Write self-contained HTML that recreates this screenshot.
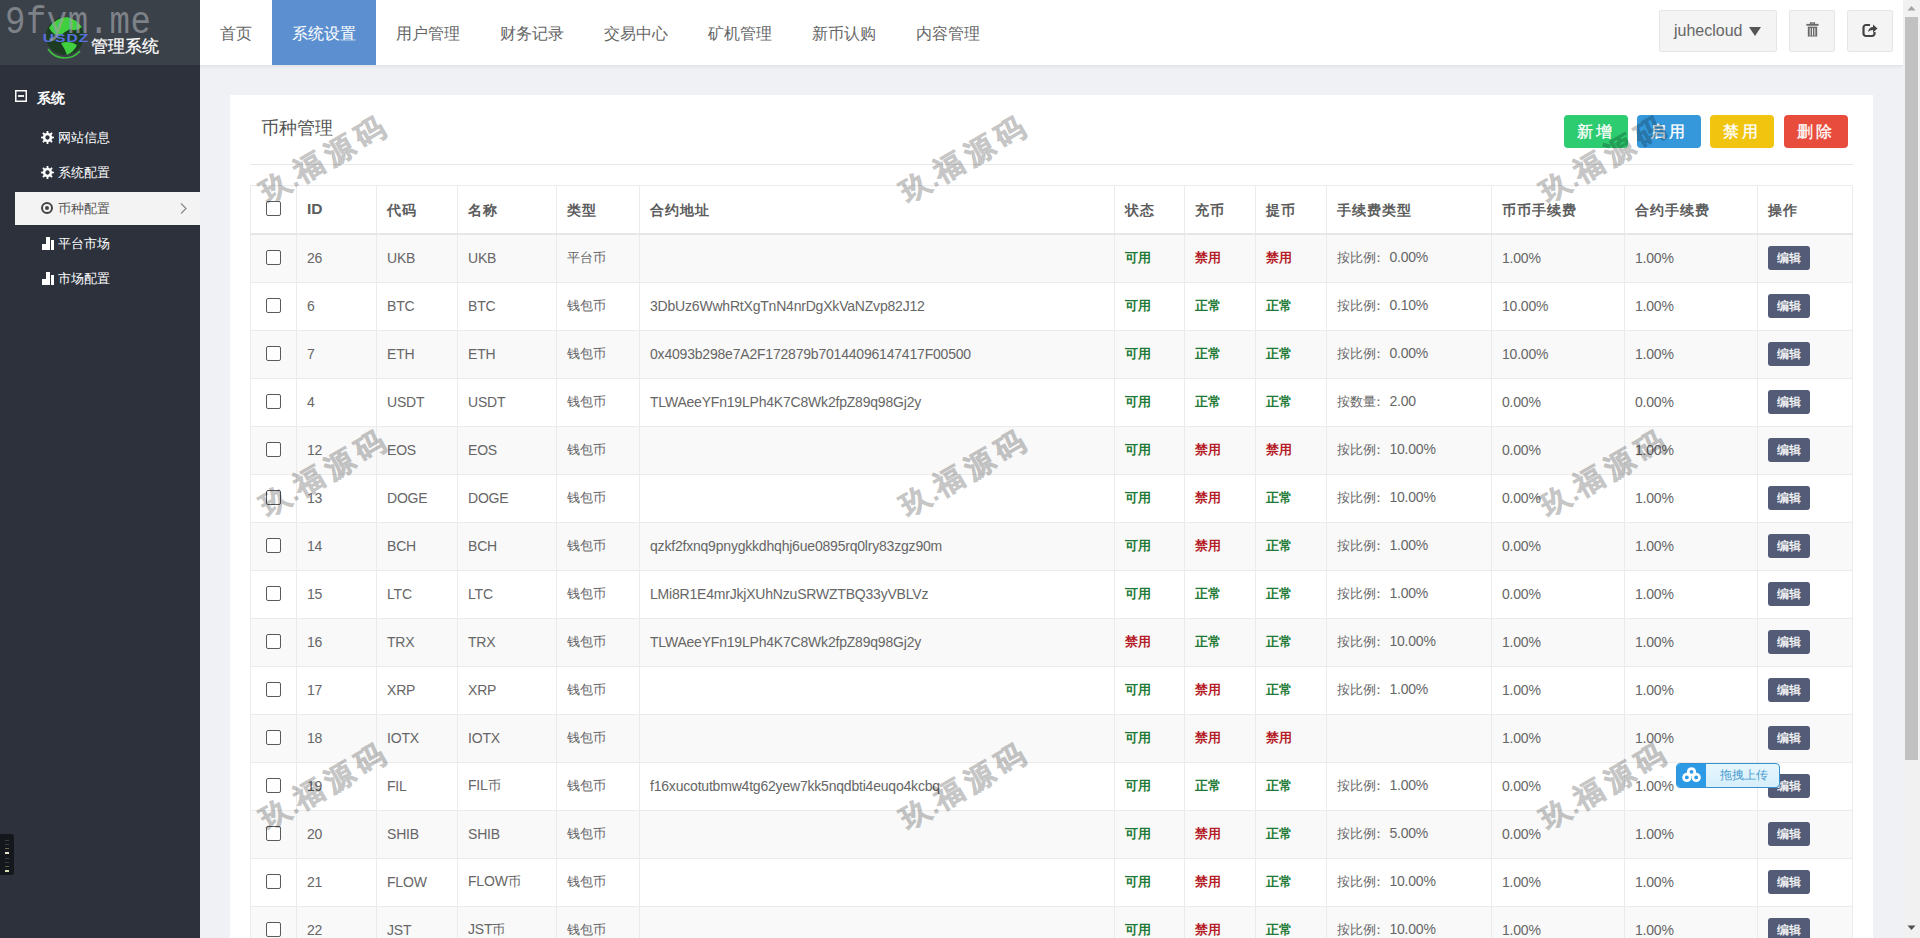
<!DOCTYPE html>
<html><head><meta charset="utf-8">
<style>
*{box-sizing:border-box;margin:0;padding:0}
html,body{width:1920px;height:938px;overflow:hidden}
body{font-family:"Liberation Sans",sans-serif;background:#eff1f5;position:relative;color:#666;font-size:14px}
#logo{position:absolute;left:0;top:0;width:200px;height:65px;background:#3b4149}
#side{position:absolute;left:0;top:65px;width:200px;height:873px;background:#2c313c}
#hdr{position:absolute;left:200px;top:0;width:1703px;height:65px;background:#fff;box-shadow:0 1px 0 #e4e5e9,0 2px 0 #e8e9ed,0 3px 2px rgba(0,0,0,.03)}
#nav{position:absolute;left:0;top:0;height:65px;display:flex}
#nav a{display:block;height:65px;line-height:67px;padding:0 20px;font-size:16px;color:#666;text-decoration:none}
#nav a.on{background:#5b8fd0;color:#fff}
.tb{position:absolute;top:10px;height:42px;background:#f4f4f4;border:1px solid #e6e6e6;border-radius:2px}
#card{position:absolute;left:230px;top:95px;width:1643px;height:900px;background:#fff}
#ttl{position:absolute;left:31px;top:21px;font-size:18px;color:#555}
#uline{position:absolute;left:20px;top:69px;width:1603px;height:1px;background:#e8e8e8}
.btn{position:absolute;top:20px;width:64px;height:33px;border-radius:4px;color:#fff;font-size:16px;-webkit-text-stroke:0.3px #fff;text-align:center;line-height:33px;letter-spacing:3px}
table{position:absolute;left:20px;top:90px;border-collapse:collapse;table-layout:fixed;width:1603px}
td,th{border:1px solid #ebebeb;height:48px;padding:0 0 0 10px;text-align:left;white-space:nowrap;overflow:hidden;font-size:14px;color:#666;font-weight:normal;letter-spacing:-0.2px}
th{font-weight:bold;color:#5c5c5c;border-bottom:2px solid #e6e6e6;font-size:14px;letter-spacing:1px;padding-top:3px}
tr.odd td{background:#f9f9f9}
th:nth-child(2){font-size:15.5px;letter-spacing:0;padding-top:0}
.c{font-size:13px}
.col{display:inline-block;width:14px;font-size:13px;text-indent:-3px;overflow:hidden;vertical-align:top}
tbody td{padding-bottom:2px}
tbody tr:first-child td{height:49px;padding-bottom:0}
tbody tr:first-child .cb{margin-top:-5px}
th .cb{margin-top:-7px}
td .cb{margin-top:-3px}
.cb{display:inline-block;width:15px;height:15px;border:1px solid #5a5a5a;border-radius:2px;background:#fff;vertical-align:middle;margin-left:5px}
b.g{color:#1d7a34;font-weight:bold;font-size:13px}
b.r{color:#b51d28;font-weight:bold;font-size:13px}
.edit{display:inline-block;width:42px;height:24px;line-height:24px;text-align:center;background:#535b77;color:#fff;border-radius:3px;font-size:12px;-webkit-text-stroke:0.25px #fff;letter-spacing:0}
.wm{position:absolute;width:160px;height:40px;line-height:40px;margin:-22px 0 0 -77px;font-size:29px;font-weight:bold;color:#000;-webkit-text-stroke:0.8px #000;opacity:.22;letter-spacing:6px;transform:rotate(-30deg);white-space:nowrap;text-align:center}
.dot{font-style:normal;letter-spacing:0;margin:0 2px 0 -4px;font-size:22px}
#sb{position:absolute;left:1903px;top:0;width:17px;height:938px;background:#f1f1f1}
.sh{position:absolute;left:15px;top:23px;height:20px;line-height:20px;font-size:14px;font-weight:bold;color:#fff;padding-left:22px}
.minus{position:absolute;left:0;top:2px;width:12px;height:12px;border:1.6px solid #fff}
.minus:after{content:"";position:absolute;left:1.6px;top:3.6px;width:5.6px;height:1.8px;background:#fff}
.si{position:absolute;left:15px;width:185px;height:33px;line-height:33px;font-size:13px;color:#fff;padding-left:43px}
.si.on{background:#f3f3f3;color:#555}
.ic{position:absolute;left:26px;top:0;font-style:normal;font-size:13px}
.ring{top:10px;width:12px;height:12px;border:2px solid #444;border-radius:50%}
.ring:after{content:"";position:absolute;left:2px;top:2px;width:4px;height:4px;border-radius:50%;background:#444}
.bars{top:10px;width:12px;height:12px;display:flex;align-items:flex-end;gap:1px}
.bars u{display:block;width:3px;background:#fff}
.chev{position:absolute;left:165px;top:11px}
#mini{position:absolute;left:0;top:769px;width:14px;height:41px;background:#14171c;border-radius:0 3px 3px 0}
#mini i{position:absolute;left:5px;width:4px;height:1px}
#thumb{position:absolute;left:2px;top:17px;width:13px;height:743px;background:#c1c1c1}
#drag{position:absolute;left:1676px;top:763px;width:104px;height:25px;border:1px solid #3591d0;border-radius:4px;background:linear-gradient(#e6f6fd,#d6effb);overflow:hidden}
.dico{position:absolute;left:0;top:0;width:29px;height:23px;background:#2d9ae6}
.dico svg{position:absolute;left:0;top:0}
.dtx{position:absolute;left:43px;top:0;line-height:23px;font-size:12px;color:#4a9ccf}
</style></head><body>
<div id="logo">
 <svg style="position:absolute;left:40px;top:12px" width="52" height="50" viewBox="0 0 52 50">
  <circle cx="25" cy="24" r="19" fill="#1d3d22"/>
  <path d="M9 16 Q15 6 27 5 Q36 7 42 15 Q36 20 30 17 Q24 20 20 24 Q14 24 9 16Z" fill="#3fcf3f"/>
  <path d="M21 31 Q30 28 37 33 Q34 40 27 43 Q25 37 21 31Z" fill="#3fcf3f"/>
  <path d="M8 37 Q14 46 25 46 Q34 46 40 39" stroke="#3cc23c" stroke-width="1.6" fill="none"/>
  <text x="2.2" y="35" font-family="Liberation Sans" font-size="12.5" font-weight="bold" fill="#5a6fe0" letter-spacing="0.8" transform="scale(1.25,0.85)">USDZ</text>
 </svg>
 <div style="position:absolute;left:91px;top:36px;font-size:16.5px;color:#fff;line-height:20px;-webkit-text-stroke:0.25px #fff">管理系统</div>
 <div style="position:absolute;left:5px;top:0px;font-family:'Liberation Mono',monospace;font-size:34px;line-height:40px;letter-spacing:0.5px;color:rgba(160,164,170,.68);transform:scaleY(1.15);transform-origin:0 0">9fym.me</div>
</div>
<div id="side">
 <div class="sh"><svg style="position:absolute;left:0;top:2px" width="12" height="12" viewBox="0 0 12 12"><rect x="0.75" y="0.75" width="10.5" height="10.5" fill="none" stroke="#fff" stroke-width="1.5"/><rect x="3" y="5.1" width="6" height="1.8" fill="#fff"/></svg>系统</div>
 <div class="si" style="top:56px"><svg class="ic" style="top:10px;left:26px" width="13" height="13" viewBox="0 0 12 12"><path fill-rule="evenodd" fill="#fff" d="M10.20 5.08 L11.95 5.22 L11.95 6.78 L10.20 6.92 L9.97 7.65 L9.62 8.32 L10.76 9.66 L9.66 10.76 L8.32 9.62 L7.65 9.97 L6.92 10.20 L6.78 11.95 L5.22 11.95 L5.08 10.20 L4.35 9.97 L3.68 9.62 L2.34 10.76 L1.24 9.66 L2.38 8.32 L2.03 7.65 L1.80 6.92 L0.05 6.78 L0.05 5.22 L1.80 5.08 L2.03 4.35 L2.38 3.68 L1.24 2.34 L2.34 1.24 L3.68 2.38 L4.35 2.03 L5.08 1.80 L5.22 0.05 L6.78 0.05 L6.92 1.80 L7.65 2.03 L8.32 2.38 L9.66 1.24 L10.76 2.34 L9.62 3.68 L9.97 4.35Z M6 4 A2 2 0 1 0 6 8 A2 2 0 1 0 6 4Z"/></svg>网站信息</div>
 <div class="si" style="top:91px"><svg class="ic" style="top:10px;left:26px" width="13" height="13" viewBox="0 0 12 12"><path fill-rule="evenodd" fill="#fff" d="M10.20 5.08 L11.95 5.22 L11.95 6.78 L10.20 6.92 L9.97 7.65 L9.62 8.32 L10.76 9.66 L9.66 10.76 L8.32 9.62 L7.65 9.97 L6.92 10.20 L6.78 11.95 L5.22 11.95 L5.08 10.20 L4.35 9.97 L3.68 9.62 L2.34 10.76 L1.24 9.66 L2.38 8.32 L2.03 7.65 L1.80 6.92 L0.05 6.78 L0.05 5.22 L1.80 5.08 L2.03 4.35 L2.38 3.68 L1.24 2.34 L2.34 1.24 L3.68 2.38 L4.35 2.03 L5.08 1.80 L5.22 0.05 L6.78 0.05 L6.92 1.80 L7.65 2.03 L8.32 2.38 L9.66 1.24 L10.76 2.34 L9.62 3.68 L9.97 4.35Z M6 4 A2 2 0 1 0 6 8 A2 2 0 1 0 6 4Z"/></svg>系统配置</div>
 <div class="si on" style="top:127px"><i class="ic ring"></i>币种配置<svg class="chev" width="7" height="11" viewBox="0 0 7 11"><path d="M1 0.5 L6 5.5 L1 10.5" stroke="#888" stroke-width="1.2" fill="none"/></svg></div>
 <div class="si" style="top:162px"><svg class="ic" style="top:10px;left:27px" width="12" height="13" viewBox="0 0 12 13"><rect x="0" y="7" width="4" height="6" fill="#fff"/><rect x="4" y="0" width="4" height="13" fill="#fff"/><rect x="9" y="3" width="3" height="10" fill="#fff"/></svg>平台市场</div>
 <div class="si" style="top:197px"><svg class="ic" style="top:10px;left:27px" width="12" height="13" viewBox="0 0 12 13"><rect x="0" y="7" width="4" height="6" fill="#fff"/><rect x="4" y="0" width="4" height="13" fill="#fff"/><rect x="9" y="3" width="3" height="10" fill="#fff"/></svg>市场配置</div>
 <div id="mini"><i style="top:6px;background:#3a3d38"></i><i style="top:10px;background:#3a3d38"></i><i style="top:14px;background:#6b6b55"></i><i style="top:18px;background:#e8e8d0;height:2px"></i><i style="top:24px;background:#3a3d38"></i><i style="top:28px;background:#3a3d38"></i><i style="top:32px;background:#55604a"></i><i style="top:36px;background:#d8e0b0;height:2px"></i></div>
</div>
<div id="hdr">
 <div id="nav"><a>首页</a><a class="on">系统设置</a><a>用户管理</a><a>财务记录</a><a>交易中心</a><a>矿机管理</a><a>新币认购</a><a>内容管理</a></div>
 <div class="tb" style="left:1459px;width:118px"><span style="position:absolute;left:14px;top:10px;font-size:16px;color:#666;line-height:20px">juhecloud</span><span style="position:absolute;left:89px;top:16px;width:0;height:0;border-left:6px solid transparent;border-right:6px solid transparent;border-top:9px solid #555"></span></div>
 <div class="tb" style="left:1589px;width:46px"><svg style="position:absolute;left:16px;top:11px" width="13" height="15" viewBox="0 0 13 16"><rect x="4.5" y="0" width="4" height="2" fill="none" stroke="#6a6a6a" stroke-width="1.2"/><rect x="0" y="2" width="13" height="2" fill="#6a6a6a"/><path d="M1.5 5h10v10.5h-10z" fill="#6a6a6a"/><path d="M4 6.5v8M6.5 6.5v8M9 6.5v8" stroke="#f4f4f4" stroke-width="1"/></svg></div>
 <div class="tb" style="left:1647px;width:46px"><svg style="position:absolute;left:14px;top:12px" width="16" height="15" viewBox="0 0 16 15"><path d="M8 2H4a2.5 2.5 0 0 0-2.5 2.5v6A2.5 2.5 0 0 0 4 13h6a2.5 2.5 0 0 0 2.5-2.5V9" fill="none" stroke="#444" stroke-width="2.2"/><path d="M6 9 Q7 4 11 4V1.5L15.5 5.5L11 9.5V7Q8 7 6 9Z" fill="#444"/></svg></div>
</div>
<div id="card">
 <div id="ttl">币种管理</div>
 <div class="btn" style="left:1334px;background:#2ecc71">新增</div>
 <div class="btn" style="left:1407px;background:#3498db">启用</div>
 <div class="btn" style="left:1480px;background:#f1c40f">禁用</div>
 <div class="btn" style="left:1554px;background:#e74c3c">删除</div>
 <div id="uline"></div>
 <table><colgroup><col style="width:46px"><col style="width:80px"><col style="width:81px"><col style="width:99px"><col style="width:83px"><col style="width:475px"><col style="width:70px"><col style="width:71px"><col style="width:71px"><col style="width:165px"><col style="width:133px"><col style="width:133px"><col style="width:95px"></colgroup>
 <thead><tr><th><i class="cb"></i></th><th>ID</th><th>代码</th><th>名称</th><th>类型</th><th>合约地址</th><th>状态</th><th>充币</th><th>提币</th><th>手续费类型</th><th>币币手续费</th><th>合约手续费</th><th>操作</th></tr></thead>
 <tbody>
<tr class="odd"><td><i class="cb"></i></td><td>26</td><td>UKB</td><td>UKB</td><td><span class="c">平台币</span></td><td></td><td><b class="g">可用</b></td><td><b class="r">禁用</b></td><td><b class="r">禁用</b></td><td><span class="c">按比例</span><span class="col">：</span>0.00%</td><td>1.00%</td><td>1.00%</td><td><span class="edit">编辑</span></td></tr>
<tr class=""><td><i class="cb"></i></td><td>6</td><td>BTC</td><td>BTC</td><td><span class="c">钱包币</span></td><td>3DbUz6WwhRtXgTnN4nrDgXkVaNZvp82J12</td><td><b class="g">可用</b></td><td><b class="g">正常</b></td><td><b class="g">正常</b></td><td><span class="c">按比例</span><span class="col">：</span>0.10%</td><td>10.00%</td><td>1.00%</td><td><span class="edit">编辑</span></td></tr>
<tr class="odd"><td><i class="cb"></i></td><td>7</td><td>ETH</td><td>ETH</td><td><span class="c">钱包币</span></td><td>0x4093b298e7A2F172879b70144096147417F00500</td><td><b class="g">可用</b></td><td><b class="g">正常</b></td><td><b class="g">正常</b></td><td><span class="c">按比例</span><span class="col">：</span>0.00%</td><td>10.00%</td><td>1.00%</td><td><span class="edit">编辑</span></td></tr>
<tr class=""><td><i class="cb"></i></td><td>4</td><td>USDT</td><td>USDT</td><td><span class="c">钱包币</span></td><td>TLWAeeYFn19LPh4K7C8Wk2fpZ89q98Gj2y</td><td><b class="g">可用</b></td><td><b class="g">正常</b></td><td><b class="g">正常</b></td><td><span class="c">按数量</span><span class="col">：</span>2.00</td><td>0.00%</td><td>0.00%</td><td><span class="edit">编辑</span></td></tr>
<tr class="odd"><td><i class="cb"></i></td><td>12</td><td>EOS</td><td>EOS</td><td><span class="c">钱包币</span></td><td></td><td><b class="g">可用</b></td><td><b class="r">禁用</b></td><td><b class="r">禁用</b></td><td><span class="c">按比例</span><span class="col">：</span>10.00%</td><td>0.00%</td><td>1.00%</td><td><span class="edit">编辑</span></td></tr>
<tr class=""><td><i class="cb"></i></td><td>13</td><td>DOGE</td><td>DOGE</td><td><span class="c">钱包币</span></td><td></td><td><b class="g">可用</b></td><td><b class="r">禁用</b></td><td><b class="g">正常</b></td><td><span class="c">按比例</span><span class="col">：</span>10.00%</td><td>0.00%</td><td>1.00%</td><td><span class="edit">编辑</span></td></tr>
<tr class="odd"><td><i class="cb"></i></td><td>14</td><td>BCH</td><td>BCH</td><td><span class="c">钱包币</span></td><td>qzkf2fxnq9pnygkkdhqhj6ue0895rq0lry83zgz90m</td><td><b class="g">可用</b></td><td><b class="r">禁用</b></td><td><b class="g">正常</b></td><td><span class="c">按比例</span><span class="col">：</span>1.00%</td><td>0.00%</td><td>1.00%</td><td><span class="edit">编辑</span></td></tr>
<tr class=""><td><i class="cb"></i></td><td>15</td><td>LTC</td><td>LTC</td><td><span class="c">钱包币</span></td><td>LMi8R1E4mrJkjXUhNzuSRWZTBQ33yVBLVz</td><td><b class="g">可用</b></td><td><b class="g">正常</b></td><td><b class="g">正常</b></td><td><span class="c">按比例</span><span class="col">：</span>1.00%</td><td>0.00%</td><td>1.00%</td><td><span class="edit">编辑</span></td></tr>
<tr class="odd"><td><i class="cb"></i></td><td>16</td><td>TRX</td><td>TRX</td><td><span class="c">钱包币</span></td><td>TLWAeeYFn19LPh4K7C8Wk2fpZ89q98Gj2y</td><td><b class="r">禁用</b></td><td><b class="g">正常</b></td><td><b class="g">正常</b></td><td><span class="c">按比例</span><span class="col">：</span>10.00%</td><td>1.00%</td><td>1.00%</td><td><span class="edit">编辑</span></td></tr>
<tr class=""><td><i class="cb"></i></td><td>17</td><td>XRP</td><td>XRP</td><td><span class="c">钱包币</span></td><td></td><td><b class="g">可用</b></td><td><b class="r">禁用</b></td><td><b class="g">正常</b></td><td><span class="c">按比例</span><span class="col">：</span>1.00%</td><td>1.00%</td><td>1.00%</td><td><span class="edit">编辑</span></td></tr>
<tr class="odd"><td><i class="cb"></i></td><td>18</td><td>IOTX</td><td>IOTX</td><td><span class="c">钱包币</span></td><td></td><td><b class="g">可用</b></td><td><b class="r">禁用</b></td><td><b class="r">禁用</b></td><td></td><td>1.00%</td><td>1.00%</td><td><span class="edit">编辑</span></td></tr>
<tr class=""><td><i class="cb"></i></td><td>19</td><td>FIL</td><td>FIL<span class="c">币</span></td><td><span class="c">钱包币</span></td><td>f16xucotutbmw4tg62yew7kk5nqdbti4euqo4kcbq</td><td><b class="g">可用</b></td><td><b class="g">正常</b></td><td><b class="g">正常</b></td><td><span class="c">按比例</span><span class="col">：</span>1.00%</td><td>0.00%</td><td>1.00%</td><td><span class="edit">编辑</span></td></tr>
<tr class="odd"><td><i class="cb"></i></td><td>20</td><td>SHIB</td><td>SHIB</td><td><span class="c">钱包币</span></td><td></td><td><b class="g">可用</b></td><td><b class="r">禁用</b></td><td><b class="g">正常</b></td><td><span class="c">按比例</span><span class="col">：</span>5.00%</td><td>0.00%</td><td>1.00%</td><td><span class="edit">编辑</span></td></tr>
<tr class=""><td><i class="cb"></i></td><td>21</td><td>FLOW</td><td>FLOW<span class="c">币</span></td><td><span class="c">钱包币</span></td><td></td><td><b class="g">可用</b></td><td><b class="r">禁用</b></td><td><b class="g">正常</b></td><td><span class="c">按比例</span><span class="col">：</span>10.00%</td><td>1.00%</td><td>1.00%</td><td><span class="edit">编辑</span></td></tr>
<tr class="odd"><td><i class="cb"></i></td><td>22</td><td>JST</td><td>JST<span class="c">币</span></td><td><span class="c">钱包币</span></td><td></td><td><b class="g">可用</b></td><td><b class="r">禁用</b></td><td><b class="g">正常</b></td><td><span class="c">按比例</span><span class="col">：</span>10.00%</td><td>1.00%</td><td>1.00%</td><td><span class="edit">编辑</span></td></tr>
 </tbody></table>
</div>
<div class="wm" style="left:322px;top:160px">玖<i class="dot">.</i>福源码</div><div class="wm" style="left:962px;top:160px">玖<i class="dot">.</i>福源码</div><div class="wm" style="left:1602px;top:160px">玖<i class="dot">.</i>福源码</div><div class="wm" style="left:322px;top:474px">玖<i class="dot">.</i>福源码</div><div class="wm" style="left:962px;top:474px">玖<i class="dot">.</i>福源码</div><div class="wm" style="left:1602px;top:474px">玖<i class="dot">.</i>福源码</div><div class="wm" style="left:322px;top:787px">玖<i class="dot">.</i>福源码</div><div class="wm" style="left:962px;top:787px">玖<i class="dot">.</i>福源码</div><div class="wm" style="left:1602px;top:787px">玖<i class="dot">.</i>福源码</div>
<div id="sb"><div id="thumb"></div>
 <svg style="position:absolute;left:4px;top:5px" width="9" height="6" viewBox="0 0 9 6"><path d="M0.5 5.5 L4.5 1 L8.5 5.5Z" fill="#a3a3a3"/></svg>
 <svg style="position:absolute;left:4px;top:925px" width="9" height="6" viewBox="0 0 9 6"><path d="M0.5 0.5 L4.5 5 L8.5 0.5Z" fill="#505050"/></svg>
</div>
<div id="drag"><span class="dico"><svg width="29" height="23" viewBox="0 0 29 23"><g fill="#fff"><circle cx="14.5" cy="7.8" r="4.6"/><circle cx="9.8" cy="13.4" r="4.6"/><circle cx="19.2" cy="13.4" r="4.6"/></g><g fill="#2d9ae6"><circle cx="14.5" cy="7.8" r="1.9"/><circle cx="9.8" cy="13.4" r="1.9"/><circle cx="19.2" cy="13.4" r="1.9"/></g></svg></span><span class="dtx">拖拽上传</span></div>
</body></html>
